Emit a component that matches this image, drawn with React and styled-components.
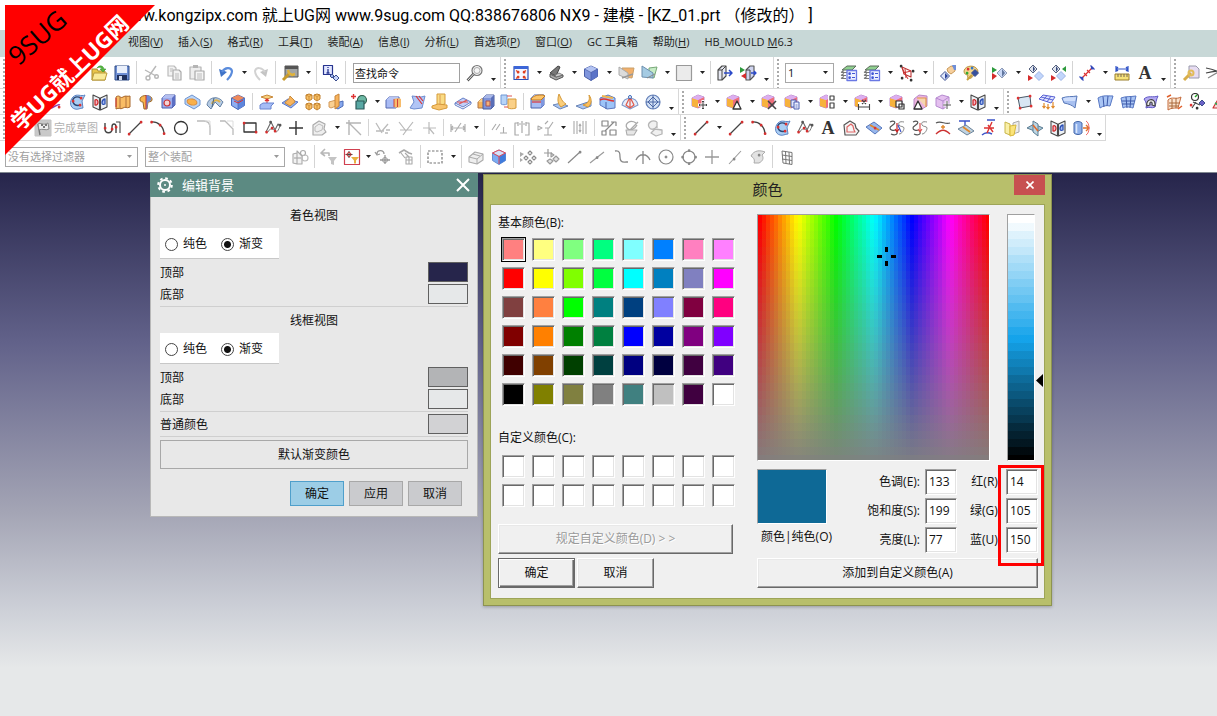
import React, { Fragment, createElement, useState } from 'react';
import styled, { createGlobalStyle, css } from 'styled-components';

const GlobalStyle = createGlobalStyle`
  *, *::before, *::after { box-sizing: border-box; }
  body {
    margin: 0;
    background: #fff;
    font-family: "Open Sans", "Noto Sans CJK SC", sans-serif;
    font-size: 12px;
    line-height: 16px;
    color: #111;
  }
  button, input, select { font: inherit; color: inherit; margin: 0; border-radius: 0; }
`;

/* ---------- icon drawing helpers (18 x 18 grid) ---------- */

const g = (...els) => createElement(Fragment, null, ...els);
const F = (d, fill) => <path d={d} fill={fill} />;
const P = (d, stroke = '#555', w = 1.2, fill = 'none') => (
  <path d={d} stroke={stroke} strokeWidth={w} fill={fill} strokeLinejoin="round" />
);
const D = (color, ...pts) => g(...pts.map(([x, y]) => <rect x={x - 1.2} y={y - 1.2} width="2.6" height="2.6" rx="1" fill={color} />));
const C = (x, y, r, stroke, w = 1.2, fill = 'none') => <circle cx={x} cy={y} r={r} stroke={stroke} strokeWidth={w} fill={fill} />;

const cube = (top, left, right, line) =>
  g(
    P('M9 2l6.500 3v7.500l-6.500 4-6.500-4V5z', line, 1, left),
    F('M9 2l6.500 3L9 8.500 2.500 5z', top),
    F('M9 8.500L15.500 5v7.500L9 16.500z', right),
    P('M2.500 5L9 8.500l6.500-3.500M9 8.500v8', line, 0.7)
  );
const box = (x, y, w, h, top, front, side, line) =>
  g(
    P(`M${x} ${y + 3}l3-3h${w}v${h}l-3 3h-${w}z`, line, 1, front),
    F(`M${x} ${y + 3}l3-3h${w}l-3 3z`, top),
    F(`M${x + w} ${y + 3}l3-3v${h}l-3 3z`, side)
  );
const pinkBox = g(
  P('M2 5l6-3 6 2v8l-6 3-6-2z', '#b78ac8', 1, '#e9a2dc'),
  F('M2 5l6 2v8l-6-2z', '#f7b23c'),
  F('M8 7l6-3v8l-6 3z', '#ee6f7c'),
  F('M2 5l6-3 6 2-6 3z', '#dcaef0')
);
const sheet = (fill = '#b9cdf6', line = '#6b88cc') => P('M2 6c4-4 9-1 14-3-2 4-2 7-3 11-4 2-6-1-9 1 1-4 0-6-2-9z', line, 1, fill);
const diamond = (x, y, s, fill, line = '#3c4f8e') => P(`M${x} ${y - s}l${s} ${s}-${s} ${s}-${s}-${s}z`, line, 1, fill);
const mirror = g(
  P('M2 2l6.500 3v12L2 14z', '#4a4a4a', 1.1, '#eef2f6'),
  P('M16 2l-6.500 3v12l6.500-3z', '#4a4a4a', 1.1, '#eef2f6'),
  P('M4 7c4-2 4 6 0 5z', '#c22', 1.2, '#f3b6c6'),
  P('M14 6c-4 1-4 7 0 5z', '#2c50b4', 1.3, '#a9bdf2')
);
const curveSheet = g(
  P('M5 4c4-4 8 0 12-2l-3 6 1 7c-3 0-5 2-8 1C2 15 1 8 5 4z', '#5d84c4', 1, '#a9cdf4'),
  P('M13 5C7 2 4 6 5 9s4 4 8 3', '#2a4673', 1.4),
  D('#d33', [13, 5], [5, 8], [12, 12])
);
const layers = g(
  P('M2 6l5-4h9l-4 4z', '#5d6d5d', 1, '#8fd08f'),
  P('M1 8.500l3-2M1 11.500l3-2M1 14.500l3-2M2 8.500h5M2 11.500h4M2 14.500h4', '#777', 1.2),
  P('M7 6.500h9.500v10H7z', '#6a78e4', 1.3, '#eef1ff'),
  D('#4056d6', [9.500, 9.500], [9.500, 13.500]),
  P('M12 9.500h3M12 13.500h3', '#4056d6', 1.2)
);
const line = g(P('M3 15L15 3', '#444', 1.2), D('#d32f2f', [3, 15], [15, 3]));
const arc = g(P('M2 3c7-1 13 5 13 12', '#444', 1.3), D('#d32f2f', [2.500, 3], [11, 6], [15, 14.500]));
const letterA = <text x="9" y="15" textAnchor="middle" fontFamily="Liberation Serif, serif" fontWeight="700" fontSize="18" fill="#333">A</text>;
const poly = g(P('M2 13L7 3l3 6 1 2 3-6 2 2', '#666', 1.1), P('M4 13c1-3 4-4 6-2s3 4 6-4', '#777', 1), D('#d32f2f', [2.500, 13], [8, 9], [11, 12]), D('#555', [6.500, 3], [16, 6]));
const hook = (c2) => g(
  P('M2 3c4-2 6 0 4 2s-4 2-4 4 3 3 6 2M3 15c4 2 7 0 6-2', '#555', 1.2),
  P('M16 3c-5-1-6 1-5 3s5 1 5 3-2 6-5 6', '#888', 1),
  P('M9 4v8M7 10l2 3 2-3', c2, 1.2)
);
const greyShape = g(P('M3 6l6-4 6 3-1 5 2 3-4 3H3z', '#aaa', 1.2, '#eee'), P('M5 8l4-3 4 2-1 4-5 2-2-1z', '#bbb', 1));
const grid4 = P('M4 3l10 1.500M4 7l10 1.500M4 11l10 1.500M5 15l9 1.500M4 3l1 12M7.500 3.500l.5 12M11 4l.5 12M14 4.500v12', '#777', 1);

const ICONS = {
  open: g(P('M2 5h5l1 2h7v9H2z', '#a98a2a', 1, '#e8c44a'), P('M4 9h13l-2 7H2z', '#b99a3a', 1, '#f9ea9a'), P('M7 4c2-3 6-3 7 1h2l-3 3-3-3h2c-1-2-3-2-5-1z', '#2f8f2f', 0.5, '#58b83f')),
  save: g(P('M2 2h14v14H2z', '#2c4a86', 1, '#6f8fd4'), F('M4 2h10v7H4z', '#eaf0fb'), F('M4 11h10v5H4z', '#20315c'), F('M6 12h3v4H6z', '#d0d8ea')),
  cut: g(P('M14 2L7 12M3 6l11 6', '#b8b8b8', 1.4), C(6, 14, 2, '#b8b8b8', 1.4), C(14.500, 12.500, 1.800, '#b8b8b8', 1.4)),
  copy: g(P('M3 2h6l2 2v8H3z', '#bbb', 1.2, '#f2f2f2'), P('M8 6h6l2 2v8H8z', '#aaa', 1.2, '#f2f2f2'), P('M10 10h4M10 12h4M10 14h4M5 5h3M5 7h2', '#bbb', 1)),
  paste: g(P('M2 3h11v12H2z', '#b5b5b5', 1.2, '#eee'), F('M5 1h5v3H5z', '#b5b5b5'), P('M7 7h9v9H7z', '#aaa', 1.2, '#f5f5f5'), P('M9 10h5M9 12h5M9 14h5', '#bbb', 1)),
  undo: g(F('M2 5l2 8 6-5z', '#3f73c8'), P('M5 8c3-5 9-5 10-1 0 4-3 7-5 9', '#5b8cdc', 2.2)),
  redo: g(F('M16 5l-2 8-6-5z', '#c4c4c4'), P('M13 8C10 3 4 3 3 7c0 4 3 7 5 9', '#d2d2d2', 2)),
  wrench: g(P('M4 2h13v11H4z', '#555', 1, '#a2a5a5'), F('M4 2h13v3H4z', '#555'), P('M2 16l6-6', '#c79a2c', 3), P('M7 6l1 3 3 2 3-1', '#e0b23a', 2.4)),
  info: g(P('M1.500 1.500h9v9h-9z', '#26348f', 1.2, '#e3e7ff'), P('M6 5v4M6 3v1M4.500 9h3', '#26348f', 1.3), diamond(10, 12, 2, '#9db2ee'), diamond(14, 14, 3, '#c4d2fa')),
  search: g(C(11, 6.500, 5, '#777', 1.2, '#f5f5f5'), C(11, 6.500, 3, '#aaa', 1), P('M7.500 10l-6 6.500', '#555', 2.6), P('M7.500 10l-6 6.500', '#eee', 1)),
  fit: g(P('M2 2.500h14v13H2z', '#2c4fb5', 1.2, '#f7f7ff'), F('M2 2h14v3H2z', '#3c66d8'), D('#e04020', [6, 8], [12, 8], [6, 13], [12, 13]), P('M4 6.500l3 2M14 6.500l-3 2M4 14.500l3-2M14 14.500l-3-2', '#e04020', 1.2)),
  laptop: g(P('M3 9l8-7 2 1-4 9z', '#444', 1, '#777'), P('M3 10l6 3 7-2v2l-7 3-6-3z', '#555', 1, '#aaa'), P('M9 13l7-2-4-2-4 2z', '#666', 0.8, '#ccc')),
  cube: cube('#b3c3f2', '#7f95dc', '#5b74c8', '#4a5fa8'),
  orangePanel: g(P('M5 4h12l-2 10-8-1z', '#c9a06a', 1, '#f2b06c'), P('M2 3l9 6v6l-9-4z', '#aaa', 1, '#dcdcdc'), P('M5 14l11-4', '#999', 1.4)),
  clipPanel: g(P('M9 4l8-1-3 11-5-1z', '#77a877', 1, '#c6ecc6'), P('M2 2l11 7v5L2 13z', '#6c8fae', 1, '#a5cbe3'), P('M7 14l8-4', '#888', 1)),
  square: P('M1.500 1.500h15v15h-15z', '#999', 1.2, '#ebebeb'),
  exit: g(P('M2 6l4-4h4v10l-4 4H2z', '#444', 1.1, '#e6e8f2'), P('M6 6l4-4M2 6h4v10', '#444', 1), P('M8 9h8M13 6l3 3-3 3', '#2b49c9', 1.5)),
  exitFlag: g(P('M7 6l4-4h4v10l-4 4H7z', '#555', 1.1, '#cfd4f0'), P('M11 6v10M7 6h4', '#444', 1), F('M1 3l5 3-5 3z', '#2c9a3c'), F('M7 9v6l-5-3z', '#d42c2c'), P('M12 9h5M15 7l2 2-2 2', '#2b49c9', 1.3)),
  layers,
  wcs: g(P('M4 3l9 4 0 6-7-3z', '#b33', 1.1), P('M4 4l6 11M5 9l8-2M7 5l1 9', '#c33', 1), D('#333', [3, 2], [15, 7], [4, 14], [13, 16])),
  partHand: g(P('M8 5l4-3 4 1v4l-4 3-3-2z', '#c99a5a', 1, '#f6cf9c'), F('M13 1h4v5h-2z', '#6f8fd8'), diamond(6, 12, 4.500, '#dfe6fb'), F('M6 9l3 3-3 3z', '#2d459c')),
  palette: g(P('M2 7c1-6 12-7 14 0 0 3-4 2-5 5s-7 4-5-1c-2 0-4-1-4-4z', '#b99447', 1, '#f5d68c'), D('#d33', [6, 5]), D('#37c', [10, 4]), D('#3a3', [5, 9]), diamond(13, 9, 3.500, '#36509e'), P('M5 16l5-5', '#c8a13e', 2)),
  flagPair: g(F('M1 3l5 3-5 3z', '#2c9a3c'), F('M1 9l5 3-5 4z', '#d42c2c'), diamond(11, 9, 5, '#c9d8f6', '#8f9cb8'), F('M11 5l3 4-3 4z', '#62779f')),
  dia1: g(diamond(7, 5, 4, '#dfe4ee', '#56627e'), F('M7 2l2 3-2 3z', '#34467a'), diamond(13, 12, 4.500, '#c2d6fb', '#9db4e6'), F('M2 11l5 3-5 3z', '#d42c2c')),
  dia2: g(diamond(7, 5, 4, '#dfe4ee', '#56627e'), F('M7 2l2 3-2 3z', '#34467a'), diamond(12, 12, 4.500, '#c2d6fb', '#9db4e6'), F('M2 11l5 3-5 3z', '#d42c2c'), F('M17 2v6l-4-3z', '#2c9a3c')),
  measure: g(P('M4 14L14 4', '#d33', 1.2), P('M6 9l3 3M9 6l3 3', '#d33', 1.1), P('M1.500 12.500l4 4M12.500 1.500l4 4', '#3448b8', 1.2), D('#3448b8', [4, 14], [14, 4])),
  ruler: g(P('M3 2v6M15 2v6M3 5h12M5 3L3 5l2 2M13 3l2 2-2 2', '#2f52c8', 1.2), P('M2 10h14v6H2z', '#9a7f2a', 1, '#f6e27a'), P('M5 10v3M8 10v3M11 10v3M14 10v3', '#765', 1)),
  letterA,
  keyDoc: g(P('M7 2h7l3 3v9H7z', '#99a', 1, '#e7dcf2'), P('M2 16l7-7', '#d8ae4a', 3), C(9, 9, 2.500, '#e2bc5a', 2)),
  redCurve: g(P('M1 4c8 1 11 3 16 6M1 9c8-2 12-2 16-2', '#444', 1.2), P('M3 14l12-7', '#888', 1.1)),

  swirl: g(P('M2 12c4 3 8-8 12-4M3 15c5 2 9-5 12-3', '#8a3bb0', 1.5), D('#d33', [14, 14])),
  curveSheet,
  mirror,
  orangeTube: g(P('M2 4c4-3 4 2 7 0s4 0 7-1v11c-4 2-4-1-7 1s-4-1-7 1z', '#a8672b', 1, '#f9bc64'), P('M6 4v11M12 3v12', '#b0713a', 1), P('M2 5v9', '#c33', 1)),
  mushroom: g(P('M3 7c-1-6 13-6 12 0 0 2-4 2-4 2l-1 7H7L6 9S3 9 3 7z', '#9a6a2c', 1, '#f7b44c'), F('M9 2c6 0 7 6 2 7l-1 7H9z', '#6d8ad8'), P('M9 2v14', '#c33', 1)),
  holeCube: g(box(2, 2, 10, 10, '#b3bff2', '#9babec', '#5c6fc4', '#4b5cab'), C(7, 10, 3, '#c33', 1.2, '#f3d3d3')),
  orangeBlob: g(P('M2 6l7-4 8 5v5l-6 4-9-5z', '#6f94d0', 1, '#b9d5f8'), <ellipse cx="9" cy="9" rx="5" ry="3" fill="#f9b04a" stroke="#d98a3c" transform="rotate(12 9 9)" />),
  dome: g(P('M1 12C2 4 12 2 17 9l-3 5-5-5-4 7z', '#6682a4', 1, '#b5cbe4'), P('M6 11c1-4 5-5 8-2', '#e0b24b', 2), P('M8 5l-2 9', '#4a6684', 1)),
  bluePad: g(cube('#f08a5c', '#8eaef2', '#5f86dc', '#4668b8'), P('M5 8l4 2 5-3', '#d33', 1)),
  liftPad: g(P('M3 4l6-2 6 2-6 2z', '#c98a3c', 1, '#f8d07c'), P('M9 6v6M7 8l2-2 2 2', '#d33', 1.2), P('M2 12l3-2h11l-3 3v3H2z', '#6a86d0', 1, '#a6bdf6')),
  wavePad: g(P('M1 10l6-4 10 3-7 6z', '#5b77c8', 1, '#8fb1f2'), P('M4 10c2-4 4-2 5-7l4 4 1 2-5 4z', '#c78a3c', 1, '#f8b45c')),
  fourCubes: g(...[[2, 1], [10, 1], [2, 10], [10, 10]].map(([x, y]) => g(
    P(`M${x} ${y + 1}l3-1 3 1v4l-3 2-3-2z`, '#c07f2c', 1, '#fbc468'),
    P(`M${x} ${y + 1}l3 1.500 3-1.500M${x + 3} ${y + 3}v3`, '#c07f2c', 0.8)
  ))),
  splitBox: g(P('M9 10l7-2v5l-5 3-2-1z', '#4d6cb8', 1, '#86a7ee'), P('M2 9l7-2v6l-5 2-2-1z', '#d39a5a', 1, '#fad092'), P('M8 3l4-2v12l-4 3z', '#c8863a', 1, '#f7b35c')),
  addShape: g(C(12, 7, 4.500, '#2d5a4a', 1.1, '#6cb8a4'), P('M6 8h8v8H6z', '#2d5a5a', 1.2, '#58a8a4'), P('M1 3.500h5M3.500 1v5', '#d33', 1.4)),
  cylBox: g(box(1, 4, 10, 8, '#b7c5f4', '#a9bbf4', '#6a82d2', '#5468b0'), F('M9 6c2-1 6-1 7 0v8c-2 1-5 1-7 0z', '#f7bc6c'), P('M9 6v8M12.500 6v8', '#c33', 0.9)),
  foldSheet: g(P('M4 3l9 1 4-1-3 12-8 1-4-1 4-6z', '#6d8cd0', 1, '#b1c5f6'), P('M8 3l6 8M11 3l4 5', '#d33', 1.2)),
  trimY: g(P('M6 1h8v10l-8 2z', '#d59a3a', 1, '#fadc84'), P('M1 13l6-2 9 1v3l-8 2-7-2z', '#d59a3a', 1, '#f8c46c'), P('M9 2v10', '#d99a55', 1)),
  padLine: g(P('M1 10l8-5 8 4-8 5z', '#6681c8', 1, '#c3d0f8'), P('M3 9h11M5 11l8-4', '#d55', 1.1), P('M1 10v2l8 4 8-5V9', '#6681c8', 1)),
  orangeBlock: g(box(1, 6, 6, 6, '#f9cf8c', '#f7b45a', '#dc8a3c', '#af774a'), box(6, 2, 8, 11, '#a9b8e8', '#7f93d8', '#5a6fb8', '#4b5c9b'), P('M9 8h4v5H9z', '#a55', 1, '#f3b27a')),
  twoTubes: g(P('M1 2h6v9c-2 1-4 1-6 0z', '#6f96d4', 1, '#b6d4f8'), P('M8 6h8v9c-3 1-6 1-8 0z', '#d59a3a', 1, '#fad088'), P('M7 3h5M4 14h4', '#d55', 1)),
  edgeBlend: g(box(2, 2, 10, 10, '#c9d5f8', '#a8bdf2', '#7f97e0', '#4b62ab'), P('M2 6c3-4 7-4 12-4l2 1-4 4H3z', '#c37a1c', 1, '#fbc46a'), P('M3 9h9', '#d33', 1.2)),
  faceBlend: g(P('M1 12l7 4 8-3-7-3z', '#6a86b8', 1, '#a9c4f0'), P('M7 1c2 4 3 8 7 10l-5 3c-3-3-4-7-2-13z', '#d59a3a', 1, '#fbce7a')),
  faceBlend2: g(P('M1 13l7 3 8-3V8z', '#6a86b8', 1, '#a9c4f0'), P('M14 2c1 5 0 8-6 10l5 2c4-3 4-8 1-12z', '#d59a3a', 1, '#fbbe5a')),
  sheetRed: g(P('M2 5l8-3 7 3v10l-8 1-7-4z', '#5d78c0', 1, '#9dc4f8'), P('M2 7c5-3 9 1 14 1', '#d33', 1.6), P('M4 3l11 2', '#f0b44c', 2), P('M8 9v7', '#4a62a8', 1)),
  tentRed: g(P('M1 12C3 3 15 3 17 12l-8 4z', '#7f97c8', 1.1, '#e6eefb'), P('M9 3v12M9 4l-4 8 4 3M9 4l4 8-4 3', '#e05a4a', 1.2), C(9, 4, 1.500, '#36b', 1, '#fff')),
  globe: g(C(9, 9, 7, '#6480b8', 1.2, '#d4e2f6'), P('M9 2v14M2 9h14', '#4a66a4', 1), P('M9 4l5 5-5 5-5-5z', '#4a66a4', 1)),
  pinkMove: g(pinkBox, P('M13 7v10M8 12h10', '#fff', 3), P('M13 8v8M9 12h8M12 9l1-1 1 1M12 15l1 1 1-1M10 11l-1 1 1 1M16 11l1 1-1 1', '#444', 1)),
  pinkTri: g(pinkBox, P('M12 8l4 8H8z', '#333', 1.3, '#fff')),
  pinkX: g(pinkBox, P('M8 8l8 8M16 8l-8 8', '#444', 1.6)),
  pinkCopy: g(pinkBox, P('M8 7h5v7H8z', '#4a5fb0', 1, '#dfe5fb'), P('M11 9h5v7h-5z', '#4a5fb0', 1, '#eef1ff'), P('M12.500 12h2M12.500 14h2', '#4a5fb0', 0.8)),
  pinkPair: g(pinkBox, F('M10 2h8v14h-8z', '#fff'), P('M12 3h4v4h-4zM12 10h4v5h-4z', '#444', 1.2)),
  pinkDim: g(pinkBox, F('M5 9h13v8H5z', '#fff'), P('M5.500 11v6M16.500 11v6M5.500 14h11M9 7l4 4M13 7l-4 4', '#444', 1.1)),
  pinkSel: g(pinkBox, P('M8 8h6v6H8z', '#333', 1.2, '#fff'), P('M11 11h5v5h-5z', '#333', 1.2)),
  pinkDelta: g(P('M3 6l5-4 8 1v10l-5 3H3z', '#b98ac8', 1, '#ecb3de'), P('M6 5h9v9', '#e0954c', 1.2, '#f5d6b0'), P('M7 8l4 8H3z', '#333', 1.3, '#fff')),
  pinkPlain: g(P('M2 5l6-3 7 2v8l-6 4-7-3z', '#b68ad0', 1, '#e4c0ef'), P('M2 5l7 3 6-4M9 8v8', '#b68ad0', 1), P('M13 8v8M9 12h8', '#fff', 2.6), P('M13 8v8M9 12h8', '#555', 1)),
  quad: g(P('M3 5l12-2 1 10-11 2z', '#4a5a68', 1, '#d8e6f4'), D('#d33', [3, 5], [15, 3], [16, 13], [5, 15])),
  meshArrow: g(P('M5 2l12 2-4 6-12-4z', '#5a63d4', 1, '#dfe4ff'), P('M9 2.500L5 7.500M13 3L9 9M3 4l12 3', '#5a63d4', 1), P('M6 10v5M10 11v5M15 9v6M4.500 13L6 15l1.500-2M8.500 14l1.500 2 1.500-2M13.500 13l1.500 2 1.500-2', '#e08a2c', 1.2)),
  bluePlate: g(P('M1 5c5-2 10-1 15-2l-2 12c-3-3-6-4-11-5z', '#5878b8', 1, '#a8c0f0'), F('M2 5.500c5-2 9-1 13-1.500l-1 4H3z', '#cfdefc')),
  plate3: g(P('M2 5c5-3 9-2 15-2l-3 10c-4-1-7 0-10 2z', '#5878c4', 1, '#a8c4f4'), P('M7 3.500L8 14M12 3l-1 10', '#3c58a8', 1)),
  plateGrid: g(P('M2 5c5-2 9-1 15-2l-3 12c-4-1-7-2-10 0z', '#5878c4', 1, '#a8c4f4'), P('M7 4L8 15M12 3.500l-1 11M3 8h13M3 11h12', '#3c58a8', 1)),
  plateArc: g(sheet('#b3a9f2', '#5f58c4'), P('M5 13c-2-7 8-9 8-2v2l-3-1c1-4-3-4-2 0z', '#444', 1.2, '#eee')),
  meshOrange: g(P('M3 7c4-4 8 0 13-3l-3 11c-5 0-7 0-10 2z', '#c46a3a', 1, '#fbe3cf'), P('M4 10h11M4 13h10M7 6v10M11 5v10', '#a8683a', 1), P('M2 4l4-2M13 16l4-3', '#e0602c', 1.5)),
  analyse: g(C(7, 4, 3.500, '#333', 1.2, '#fff'), P('M7 4l2-2', '#2a2', 1.4), P('M5 9l7 3M4 15l4-6', '#444', 1.1), diamond(14, 10, 3, '#6c62c8'), D('#d33', [3, 12]), D('#333', [9, 15])),
  redTri: g(P('M2 15L9 3l7 12z', '#c33', 1.2, '#f8dede'), P('M4 10l8 5', '#3a5', 1.5)),

  flag: g(P('M1 1h16v16H1z', '#c4c4c4', 1, '#c9c9c9'), P('M6 16L4 5', '#777', 1.4), P('M4 5c3-2 5 2 10-1l1 6c-4 2-6-1-10 1z', '#888', 1, '#eee'), F('M7 5h2v2H7zM11 5h2v2h-2zM9 7h2v2H9z', '#777')),
  profile: g(P('M2 4v6c0 5 7 5 7 0V8c0-4 4-4 4 0v6', '#444', 1.4), P('M13 3h4v11', '#444', 1.1), D('#d32f2f', [2, 9], [9, 10], [13, 8])),
  line,
  arc,
  circle: C(9, 9, 6.500, '#333', 1.3),
  fillet: g(P('M2 2h7c4 0 6 3 6 7v7', '#bbb', 1.3), P('M10 2h5v5', '#ddd', 1)),
  fillet2: g(P('M2 2l5 0 8 8v6', '#bbb', 1.3), P('M9 2h6v6', '#ddd', 1)),
  rect: g(P('M3 4h12v9H3z', '#333', 1.3), D('#d32f2f', [3, 4], [15, 13])),
  poly,
  plus: P('M9 2v14M2 9h14', '#333', 1.4),
  greyShape,
  trimCorner: P('M1 4h15M4 1v15M4 4l12 12', '#b5b5b5', 1.4),
  gTrim: P('M2 4l6 10M2 12h8M8 12l6-7M12 11h4M11 14h3', '#bbb', 1.3),
  gTrim2: P('M2 3l7 9M9 12l7-9M9 12l-3 4M3 11h12', '#b8b8b8', 1.2),
  gCross: P('M3 9h13M9 3v12M9 9l5 6', '#bbb', 1.2),
  gDim: P('M2 5v8M16 5v8M2 9h14M4 7L2 9l2 2M14 7l2 2-2 2M6 13l6-9', '#b0b0b0', 1.2),
  gPara: P('M2 11l4-6M6 11l4-6M10 14h7M13.500 8v6', '#aaa', 1.1),
  gBracket: P('M5 4H2v12h4M13 4h3v12h-4M9 2v12M6 5h2M10 5h2M5 3v4M13 3v4', '#aaa', 1.2),
  gFix: P('M2 7l4 2-4 2zM8 16h8M12 16V9M9 9h4l4-6M9 5l3-3', '#aaa', 1.1),
  gColumns: P('M3 2v13M6 2v13M12 2v13M15 2v13M9 5v8M8 7l1-2 1 2M8 11l1 2 1-2', '#aaa', 1.1),
  gBoxes: P('M2 2h6v5H2zM11 3h5v4M2 12h4v4H2zM10 11h6v5h-6zM5 12l9-9', '#888', 1.2),
  gSwirl: g(P('M13 4C7 0 1 5 4 9s8 1 10-3M6 12l9-9', '#aaa', 1.3), P('M3 11h11l-3 5H4z', '#aaa', 1.1, '#e6e6e6')),
  gHand: P('M11 3C6 0 1 4 3 8s6 2 8-1M11 3v6M5 14l4-4 7 1v4l-6 2z', '#b5b5b5', 1.3, '#f0f0f0'),
  offset: g(P('M2 6l6-4 5 3 1 4 3 3-3 4H3z', '#555', 1.2, '#f6f6f6'), P('M5 8l4-3 2 2 1 4 1 2H5z', '#d66', 1.2)),
  blueDia: g(P('M1 8l8-5 8 6-7 6z', '#5677bc', 1, '#98b7ec'), P('M5 6l9 5', '#e0882c', 1.8), D('#d33', [10, 9])),
  hookRed: g(hook('#c22'), P('M10 6l3 7', '#3a52c8', 1.2)),
  hookGrey: hook('#d55'),
  bridge: g(P('M2 4c5-3 9 2 14 0', '#555', 1.2), P('M2 15c5-5 9-5 14 0', '#c33', 1.4), P('M9 6v4M7 8h4', '#e0882c', 1.4)),
  project: g(P('M2 2h11M8 2v5', '#3a52c8', 1.4), P('M1 10l8-4 8 6-7 4z', '#6a8298', 1, '#bfd3e2'), P('M6 8l7 5', '#e0882c', 1.8)),
  projectX: g(P('M7 1h8M2 16c4-4 8-2 10-1', '#3a52c8', 1.4), P('M4 9h10M12 3L7 14M8 6l5 7', '#d33', 1.4)),
  yellowBook: g(P('M2 3l5 2v11l-5-2z', '#c8b64a', 1, '#faf0a8'), P('M16 2l-6 2v11l6-2z', '#aaa', 1, '#ececec'), P('M7 7l6-1-2 10-4 1z', '#d8b83a', 1, '#fbe47a')),
  crossPlane: g(P('M1 9l7-4 9 4-6 4z', '#5b7c92', 1, '#a9c8d8'), P('M7 2l5 3v12l-5-4z', '#5b7c92', 1, '#bcd6e4'), P('M7 6l5 6', '#e06a2c', 1.6)),
  cylArrow: g(P('M2 4c2-2 6-2 8 0v10c-2 2-6 2-8 0z', '#4467a8', 1, '#8fb0ea'), P('M4.500 5v9', '#dbe7fb', 1.6), P('M11 9h5M14 6l3 3-3 3', '#e0722c', 1.4), P('M14 2c4 2 4 12 0 14', '#e66', 1)),

  gAssem: g(P('M2 6l4-1v11l-4-1zM6 3v13h5V8z', '#aaa', 1.1, '#f2f2f2'), C(12, 5, 2.500, '#aaa'), C(14, 10, 3, '#bbb'), P('M3 10h7', '#aaa')),
  gUndoFilter: g(P('M5 1L1 5l4 3M1 5h8v3', '#b8b8b8', 1.6), F('M8 9h9l-3 4v4l-3-1v-3z', '#c4c4c4')),
  filterBox: g(P('M1.500 1.500h15v15h-15z', '#d04050', 1.2, '#fff'), P('M6 3v7M2.500 6.500h7', '#444', 1), C(6, 6.500, 2, '#c33', 1), F('M8 9h8l-3 3.500v3h-2v-3z', '#e8b040')),
  gSwapPlus: g(P('M3 6c0-5 7-4 7 0M1 4l2 3 3-1M11 7v9M6 12h10', '#999', 1.3), C(11, 12, 2.500, '#999', 1)),
  gFingers: g(P('M2 5l5-3 5 3 3 1', '#aaa', 1.6), P('M4 5l4 5M8 5l4 4M9 9h6v7H9zM12 9v7M9 12h6', '#aaa', 1.1)),
  dashed: <path d="M2 3h14v12H2z" fill="none" stroke="#777" strokeWidth="1.2" strokeDasharray="2.500 1.500" />,
  gBrick: g(P('M2 9l6-5 8 2v6l-6 4-8-2z', '#aaa', 1.1, '#eee'), P('M2 9l8 2 6-5M10 11v5M6 6l7 2', '#aaa', 1)),
  redCube: g(cube('#d4e2fb', '#7cacf4', '#3f7bdc', '#6a8fd0'), P('M2.500 5L9 2l6.500 3L9 8.500zM9 8v8', '#e04a5a', 1)),
  gPoints: g(F('M1 4l4 2-4 3zM1 10l3 2-3 2z', '#aaa'), P('M11 3l2 2-2 2-2-2zM7 8l2 2-2 2-2-2zM15 8l2 2-2 2-2-2zM11 12l2 2-2 2-2-2z', '#888', 1.1)),
  gMoveDia: g(P('M6 1v8M2 5h8', '#999', 1.2), P('M9 5l3 2-3 2zM14 8l3 3-3 3-3-3zM8 11l3 2-3 3-3-3z', '#999', 1.1, '#e4e4e4')),
  gLine: g(P('M3 15L15 4', '#888', 1.2), D('#888', [15, 4])),
  gMid: g(P('M2 15L16 4', '#999', 1.1), D('#888', [9, 9.500])),
  gSpline: P('M4 3c5-1 5 3 5 6s1 6 6 5M15 14h2', '#888', 1.3),
  gIntersect: P('M9 3v13M2 12c3-7 11-7 14 0', '#888', 1.3),
  gCenter: g(C(9, 9, 7, '#888', 1.2), C(9, 9, 1, '#888', 1, '#888')),
  gQuad: g(C(9, 9, 6, '#888', 1.2), D('#888', [9, 2.500], [9, 15.500], [2.500, 9], [15.500, 9])),
  gPlus: P('M9 2v14M2 9h14', '#999', 1.3),
  gTangent: g(P('M3 16L15 3', '#999', 1.1), D('#888', [8, 11])),
  gFace: g(P('M2 8c3-6 9-6 14-4l-3 3c2 3 1 6-3 8H5c1-3 0-5-3-7z', '#aaa', 1, '#e2e2e2'), D('#888', [10, 7])),
  gGrid: grid4,
};

/* ---------- toolbar parts ---------- */

const TitleBar = styled.header`
  height: 30px;
  padding-left: 119px;
  font-family: Roboto, "Noto Sans CJK SC", sans-serif;
  font-size: 16px;
  line-height: 32px;
  white-space: nowrap;
  overflow: hidden;
  color: #000;
`;
const MenuBar = styled.nav`
  display: flex;
  gap: 15px;
  height: 27px;
  padding: 4px 0 0 128px;
  background: #c8d8d7;
  font-size: 11px;
  white-space: nowrap;
  overflow: hidden;
`;
const MenuLink = styled.a`
  color: #222;
  text-decoration: none;
`;
const ToolRow = styled.div`
  display: flex;
  align-items: stretch;
  width: ${(p) => (p.$fit ? 'fit-content' : 'auto')};
  max-width: 100%;
  height: ${(p) => p.$h}px;
  overflow: hidden;
  background: #fff;
  border-bottom: ${(p) => (p.$plain ? '0' : '1px solid #d8d8d8')};
  border-right: ${(p) => (p.$fit ? '1px solid #d8d8d8' : '0')};
`;
const ToolButton = styled.button`
  display: flex;
  align-items: center;
  gap: 2px;
  flex: none;
  min-width: 23px;
  padding: 0 3px 0 2px;
  border: 0;
  background: none;
  color: #b0b0b0;
  font-size: 11px;
  white-space: nowrap;
`;
const CaretButton = styled.button`
  display: flex;
  align-items: center;
  justify-content: center;
  flex: none;
  width: ${(p) => (p.$tight ? 8 : 12)}px;
  padding: ${(p) => (p.$low ? '14px' : '0')} 0 0;
  border: 0;
  background: none;
`;
const Divider = styled.span`
  flex: none;
  width: 1px;
  margin: 4px 3px 4px 2px;
  background: #d4d4d4;
`;
const Grip = styled.span`
  flex: none;
  width: ${(p) => (p.$first ? 6 : 10)}px;
  margin-left: ${(p) => (p.$first ? 0 : 1)}px;
  border-left: ${(p) => (p.$first ? '0' : '1px solid #d8d8d8')};
  background: repeating-linear-gradient(to bottom, #aaa 0 2px, #fff 2px 4px) 3px 2px / 2px 100% no-repeat;
`;
const Lead = styled.span`
  flex: none;
  width: ${(p) => p.$w}px;
`;
const CommandInput = styled.input`
  flex: none;
  align-self: center;
  width: 107px;
  height: 20px;
  margin: 0 4px;
  padding: 0 1px;
  border: 1px solid #a0a0a0;
  font-size: 11px;
  outline: none;
`;
const SelectBox = styled.span`
  position: relative;
  display: flex;
  align-items: center;
  flex: none;
  align-self: center;
  width: ${(p) => p.$w}px;
  height: 20px;
  margin: ${(p) => p.$m};
  border: 1px solid #a8a8a8;
  color: ${(p) => (p.$muted ? '#a0a0a0' : '#111')};
  select {
    width: 100%;
    height: 100%;
    padding: 0 2px;
    border: 0;
    outline: none;
    background: none;
    appearance: none;
    font-size: 11px;
  }
  svg {
    position: absolute;
    right: 5px;
    pointer-events: none;
  }
`;

const Caret = ({ color = '#222' }) => (
  <svg width="5" height="3" viewBox="0 0 5 3"><path d="M0 0h5L2.500 3z" fill={color} /></svg>
);
const Icon = ({ name }) => (
  <svg width="18" height="18" viewBox="0 0 18 18" fill="none" aria-hidden="true">{ICONS[name]}</svg>
);
/* v: drop-down caret, t: tight caret, o: overflow caret, G: end of band and grip, |: divider */
const Tools = ({ items }) =>
  items.split(' ').map((it, i) => {
    if (it === '|') return <Divider key={i} />;
    if (it === 'G') return <Grip key={i} />;
    if (it === 'v' || it === 'o' || it === 't')
      return <CaretButton key={i} $low={it === 'o'} $tight={it === 't'} aria-label="menu"><Caret /></CaretButton>;
    return <ToolButton key={i} aria-label={it}><Icon name={it} /></ToolButton>;
  });
const Picker = ({ label, w, m, muted }) => (
  <SelectBox $w={w} $m={m} $muted={muted}>
    <select aria-label={label}><option>{label}</option></select>
    <Caret color={muted ? '#999' : '#222'} />
  </SelectBox>
);

/* ---------- corner ribbon ---------- */

const Ribbon = styled.div`
  position: absolute;
  z-index: 5;
  top: 5px;
  left: 5px;
  width: 150px;
  height: 150px;
  pointer-events: none;
  &::before {
    content: '';
    position: absolute;
    inset: 0;
    background: #f00;
    clip-path: polygon(0 0, 100% 0, 0 100%);
  }
`;
const RibbonText = styled.span`
  position: absolute;
  left: ${(p) => p.$x}px;
  top: ${(p) => p.$y}px;
  transform: translate(-50%, -50%) rotate(${(p) => p.$turn}deg);
  color: ${(p) => p.$color};
  font-size: ${(p) => p.$size}px;
  font-weight: ${(p) => p.$weight};
  line-height: 24px;
  white-space: nowrap;
`;

/* ---------- workspace and dialogs ---------- */

const Page = styled.div`
  position: relative;
  display: flex;
  flex-direction: column;
  min-height: 100vh;
  overflow: hidden;
`;
const Workspace = styled.main`
  position: relative;
  flex: 1;
  min-height: 440px;
  border-top: 1px solid #808890;
  background: linear-gradient(to bottom, #26254b 0, #62628a 170px, #a4a5b5 340px, #cbced6 432px, #e6e8e9 495px, #e6e8e9 100%);
`;
const BgDialog = styled.section`
  position: absolute;
  left: 150px;
  top: 0;
  width: 328px;
  background: #e8e8e8;
  border: 1px solid #b8b8b8;
  border-top: 0;
`;
const BgTitle = styled.h2`
  display: flex;
  align-items: center;
  gap: 9px;
  height: 24px;
  margin: 0 -1px;
  padding: 0 7px;
  background: #5c8a82;
  color: #fff;
  font-size: 13px;
  font-weight: 400;
`;
const IconClose = styled.button`
  display: flex;
  margin-left: auto;
  padding: 0;
  border: 0;
  background: none;
`;
const BgBody = styled.div`
  padding: 5px 9px 10px;
`;
const ViewGroup = styled.fieldset`
  margin: 0;
  padding: 0;
  border: 0;
  border-bottom: 1px solid #cfcfcf;
`;
const ViewTitle = styled.div`
  height: 26px;
  line-height: 28px;
  text-align: center;
`;
const RadioPanel = styled.div`
  display: flex;
  align-items: center;
  gap: 14px;
  width: 119px;
  height: 30px;
  margin-bottom: 4px;
  padding: 2px 0 0 5px;
  background: #fff;
  box-shadow: 0 1px 0 #c8c8c8;
`;
const RadioLabel = styled.label`
  display: flex;
  align-items: center;
  gap: 5px;
`;
const Radio = styled.input`
  appearance: none;
  width: 13px;
  height: 13px;
  border: 1px solid #444;
  border-radius: 50% !important;
  background: #fff;
  &:checked { background: radial-gradient(circle, #111 0 3px, #fff 4px); }
`;
const ColorRow = styled.div`
  display: flex;
  justify-content: space-between;
  align-items: flex-start;
  height: 22px;
  line-height: 22px;
`;
const ColorWell = styled.button`
  width: 40px;
  height: 20px;
  padding: 0;
  border: 1px solid #606060;
  background: ${(p) => p.$color};
`;
const PlainGroup = styled.div`
  padding-top: 2px;
  margin-bottom: 3px;
  border-bottom: 1px solid #cfcfcf;
`;
const FlatButton = styled.button`
  height: ${(p) => (p.$wide ? 29 : 25)}px;
  width: ${(p) => (p.$wide ? '100%' : '54px')};
  padding: 0;
  border: 1px solid ${(p) => (p.$primary ? '#4f9fcb' : '#a8a8a8')};
  background: ${(p) => (p.$primary ? '#9ccde6' : p.$wide ? '#e8e8e8' : '#cacbce')};
`;
const FlatActions = styled.div`
  display: flex;
  justify-content: flex-end;
  gap: 5px;
  margin-top: 12px;
  padding-right: 6px;
`;

const ColorDialog = styled.section`
  position: absolute;
  left: 483px;
  top: 1px;
  width: 569px;
  padding: 0 6px 6px;
  border: 1px solid #8d9350;
  background: #b8bf6b;
  box-shadow: 0 1px 3px #00000040;
`;
const ColorTitle = styled.header`
  display: flex;
  justify-content: center;
  align-items: center;
  height: 29px;
  padding-bottom: 2px;
  h2 { margin: 0; font-size: 15px; font-weight: 400; color: #222; }
`;
const CloseBox = styled.button`
  position: absolute;
  top: 0;
  right: 6px;
  display: flex;
  align-items: center;
  justify-content: center;
  width: 31px;
  height: 20px;
  padding: 0;
  border: 0;
  background: #c75050;
`;
const Client = styled.div`
  display: flex;
  gap: 24px;
  height: 395px;
  padding: 9px 7px 10px;
  border: 1px solid #9da458;
  background: #f0f0f0;
`;
const Column = styled.div`
  display: flex;
  flex-direction: column;
  flex: none;
  width: ${(p) => p.$w}px;
`;
const Caption = styled.div`
  height: ${(p) => (p.$after ? 26 : 24)}px;
  padding-top: 1px;
`;
const SwatchGrid = styled.div`
  display: grid;
  grid-template-columns: repeat(8, 23px);
  gap: 6px 7px;
  padding-left: 4px;
  margin-bottom: ${(p) => p.$after}px;
`;
const sunken = css`
  border: 1px solid;
  border-color: #a0a0a0 #fff #fff #a0a0a0;
  box-shadow: inset 1px 1px 0 #696969, inset -1px -1px 0 #e3e3e3;
`;
const raised = css`
  border: 1px solid;
  border-color: #fff #696969 #696969 #fff;
  box-shadow: inset -1px -1px 0 #a0a0a0, inset 1px 1px 0 #e8e8e8;
`;
const Swatch = styled.button`
  height: 23px;
  padding: 0;
  ${sunken}
  background: ${(p) => p.$color};
  outline: ${(p) => (p.$selected ? '1px solid #000' : 'none')};
`;
const RaisedButton = styled.button`
  height: 30px;
  width: ${(p) => (p.$w ? `${p.$w}px` : '100%')};
  padding: 0;
  ${raised}
  background: #f0f0f0;
  ${(p) => p.$default && css`
    border-color: #696969;
    box-shadow: inset 1px 1px 0 #fff, inset -1px -1px 0 #696969, inset -2px -2px 0 #a0a0a0;
  `}
  &:disabled { color: #9a9a9a; text-shadow: 1px 1px 0 #fff; }
`;
const ButtonPair = styled.div`
  display: flex;
  gap: 2px;
  margin-top: 4px;
`;
const Pickers = styled.div`
  display: flex;
  height: 247px;
  margin-bottom: 8px;
`;

const steps = (n, px, fn, dir) =>
  `linear-gradient(${dir}, ${Array.from({ length: n }, (_, i) => `${fn(i, n)} ${i * px}px ${(i + 1) * px}px`).join(', ')})`;
const greyVeil = steps(31, 8, (i, n) => `rgba(128,128,128,${(i / n).toFixed(3)})`, 'to bottom');
const hueBands = steps(58, 4, (i, n) => `hsl(${Math.round((i / (n - 1)) * 360)} 100% 50%)`, 'to right');
const lumBands = steps(31, 8, (i, n) => `hsl(200 84% ${Math.round(100 - (i / (n - 1)) * 100)}%)`, 'to bottom');

const Spectrum = styled.div`
  position: relative;
  width: 233px;
  margin-right: 17px;
  border: 1px solid;
  border-color: #a0a0a0 #fff #fff #a0a0a0;
  background: ${greyVeil}, ${hueBands};
`;
const Crosshair = styled.svg`
  position: absolute;
  left: 119px;
  top: 32px;
`;
const LumBar = styled.div`
  width: 28px;
  border: 1px solid;
  border-color: #a0a0a0 #fff #fff #a0a0a0;
  background: ${lumBands};
`;
const LumArrow = styled.svg`
  margin: 160px 0 0 1px;
`;
const Details = styled.div`
  display: flex;
  height: 89px;
`;
const Preview = styled.div`
  width: 70px;
  height: 55px;
  margin-bottom: 5px;
  border: 1px solid;
  border-color: #a0a0a0 #fff #fff #a0a0a0;
  background: #0e6996;
`;
const PreviewBox = styled.div`
  width: 94px;
  white-space: nowrap;
  span { padding-left: 4px; }
`;
const Fields = styled.div`
  display: grid;
  grid-template-columns: 74px 32px 49px 32px;
  grid-auto-rows: 26px;
  row-gap: 3px;
`;
const FieldLabel = styled.label`
  padding: 5px 5px 0 0;
  text-align: right;
  white-space: nowrap;
`;
const NumberInput = styled.input`
  width: 32px;
  height: 26px;
  padding: 0 0 2px 3px;
  ${sunken}
  outline: none;
  background: #fff;
  line-height: 16px;
`;
const RedMark = styled.div`
  position: absolute;
  left: 514px;
  top: 290px;
  width: 46px;
  height: 101px;
  border: 3px solid #f00;
  pointer-events: none;
`;

const MENUS = [
  ['视图(', 'V', ')'], ['插入(', 'S', ')'], ['格式(', 'R', ')'], ['工具(', 'T', ')'], ['装配(', 'A', ')'],
  ['信息(', 'I', ')'], ['分析(', 'L', ')'], ['首选项(', 'P', ')'], ['窗口(', 'O', ')'], ['GC 工具箱', '', ''],
  ['帮助(', 'H', ')'], ['HB_MOULD ', 'M', '6.3'],
];

const BASIC = (
  'ff8080 ffff80 80ff80 00ff80 80ffff 0080ff ff80c0 ff80ff ' +
  'ff0000 ffff00 80ff00 00ff40 00ffff 0080c0 8080c0 ff00ff ' +
  '804040 ff8040 00ff00 008080 004080 8080ff 800040 ff0080 ' +
  '800000 ff8000 008000 008040 0000ff 0000a0 800080 8000ff ' +
  '400000 804000 004000 004040 000080 000040 400040 400080 ' +
  '000000 808000 808040 808080 408080 c0c0c0 400040 ffffff'
).split(' ');

const FIELDS = [
  ['hue', '色调(E):', 133], ['red', '红(R):', 14],
  ['sat', '饱和度(S):', 199], ['green', '绿(G):', 105],
  ['lum', '亮度(L):', 77], ['blue', '蓝(U):', 150],
];

function ViewSection({ title, name, top, bottom }) {
  return (
    <ViewGroup aria-label={title}>
      <ViewTitle>{title}</ViewTitle>
      <RadioPanel>
        <RadioLabel><Radio type="radio" name={name} />纯色</RadioLabel>
        <RadioLabel><Radio type="radio" name={name} defaultChecked />渐变</RadioLabel>
      </RadioPanel>
      <ColorRow>顶部<ColorWell $color={top} aria-label="顶部" /></ColorRow>
      <ColorRow>底部<ColorWell $color={bottom} aria-label="底部" /></ColorRow>
    </ViewGroup>
  );
}

export default function App() {
  const [selected, setSelected] = useState(0);
  return (
    <Page>
      <GlobalStyle />
      <Ribbon>
        <RibbonText $x={32} $y={32} $turn={-41} $size={26} $weight={400} $color="#000">9SUG</RibbonText>
        <RibbonText $x={64} $y={67} $turn={-44} $size={22} $weight={700} $color="#fff">学UG就上UG网</RibbonText>
      </Ribbon>
      <TitleBar>www.kongzipx.com 就上UG网 www.9sug.com QQ:838676806 NX9 - 建模 - [KZ_01.prt （修改的） ]</TitleBar>
      <MenuBar>
        {MENUS.map(([a, k, b]) => (
          <MenuLink href="#" key={a}>{a}{k && <u>{k}</u>}{b}</MenuLink>
        ))}
      </MenuBar>

      <ToolRow $h={32}>
        <Grip $first />
        <Lead $w={82} />
        <Tools items="open save | cut copy paste | undo v redo | wrench v | info |" />
        <CommandInput aria-label="查找命令" defaultValue="查找命令" />
        <Tools items="search o G fit v laptop v cube v orangePanel clipPanel v square v | exit exitFlag o G" />
        <Picker label="1" w={49} m="0 4px 0 2px" />
        <Tools items="layers layers v wcs v | partHand palette | flagPair v dia1 dia2 | measure v ruler letterA o G keyDoc redCurve" />
      </ToolRow>
      <ToolRow $h={26}>
        <Grip $first />
        <Lead $w={37} />
        <Tools items="swirl curveSheet mirror orangeTube mushroom holeCube orangeBlob dome bluePad | liftPad wavePad fourCubes splitBox addShape v cylBox foldSheet trimY padLine orangeBlock twoTubes | edgeBlend faceBlend faceBlend2 sheetRed tentRed globe o G pinkMove v pinkTri v pinkX pinkCopy v pinkPair v pinkDim v pinkSel pinkDelta pinkPlain v mirror o G quad meshArrow bluePlate v plate3 plateGrid plateArc meshOrange analyse redTri" />
      </ToolRow>
      <ToolRow $h={26} $fit>
        <Grip $first />
        <Lead $w={26} />
        <ToolButton><Icon name="flag" />完成草图</ToolButton>
        <Tools items="profile line arc circle fillet fillet2 rect poly plus greyShape v trimCorner | gTrim gTrim2 gCross | gDim v | gPara gBracket gFix v gColumns | gBoxes gSwirl gHand o G line v line arc curveSheet poly letterA offset blueDia hookRed hookGrey bridge project projectX yellowBook crossPlane mirror cylArrow o" />
      </ToolRow>
      <ToolRow $h={31} $plain>
        <Picker label="没有选择过滤器" w={133} m="0 0 0 5px" muted />
        <Picker label="整个装配" w={140} m="0 4px 0 7px" muted />
        <Tools items="gAssem | gUndoFilter filterBox t gSwapPlus gFingers | dashed v | gBrick redCube | gPoints gMoveDia gLine gMid gSpline gIntersect gCenter gQuad gPlus gTangent gFace | gGrid" />
      </ToolRow>

      <Workspace>
        <BgDialog>
          <BgTitle>
            <svg width="16" height="16" viewBox="0 0 16 16" fill="none" stroke="#fff">
              <circle cx="8" cy="8" r="5" strokeWidth="2" />
              <circle cx="8" cy="8" r="6.800" strokeWidth="2" strokeDasharray="2.670 2.670" />
              <circle cx="8" cy="8" r="1" fill="#fff" stroke="none" />
            </svg>
            编辑背景
            <IconClose aria-label="关闭">
              <svg width="16" height="14" viewBox="0 0 16 14" stroke="#fff" strokeWidth="2"><path d="M2 1l12 12M14 1L2 13" /></svg>
            </IconClose>
          </BgTitle>
          <BgBody>
            <ViewSection title="着色视图" name="shaded" top="#26254b" bottom="#e6e8e9" />
            <ViewSection title="线框视图" name="wire" top="#b3b4b6" bottom="#e6e8e9" />
            <PlainGroup>
              <ColorRow>普通颜色<ColorWell $color="#d2d2d4" aria-label="普通颜色" /></ColorRow>
            </PlainGroup>
            <FlatButton $wide>默认渐变颜色</FlatButton>
            <FlatActions>
              <FlatButton $primary>确定</FlatButton>
              <FlatButton>应用</FlatButton>
              <FlatButton>取消</FlatButton>
            </FlatActions>
          </BgBody>
        </BgDialog>

        <ColorDialog>
          <ColorTitle>
            <h2>颜色</h2>
            <CloseBox aria-label="关闭">
              <svg width="8" height="8" viewBox="0 0 8 8" stroke="#fff" strokeWidth="1.600"><path d="M.5.5l7 7M7.500.5l-7 7" /></svg>
            </CloseBox>
          </ColorTitle>
          <Client>
            <Column $w={235}>
              <Caption>基本颜色(B):</Caption>
              <SwatchGrid $after={23}>
                {BASIC.map((c, i) => (
                  <Swatch key={i} $color={`#${c}`} $selected={i === selected} onClick={() => setSelected(i)} aria-label={`#${c}`} />
                ))}
              </SwatchGrid>
              <Caption $after>自定义颜色(C):</Caption>
              <SwatchGrid $after={17}>
                {Array.from({ length: 16 }, (_, i) => <Swatch key={i} $color="#fff" aria-label="自定义" />)}
              </SwatchGrid>
              <RaisedButton disabled>规定自定义颜色(D) &gt; &gt;</RaisedButton>
              <ButtonPair>
                <RaisedButton $w={77} $default>确定</RaisedButton>
                <RaisedButton $w={77}>取消</RaisedButton>
              </ButtonPair>
            </Column>
            <Column $w={287}>
              <Pickers>
                <Spectrum>
                  <Crosshair width="19" height="19" viewBox="0 0 19 19" fill="#000">
                    <path d="M8 0h3v5H8zM8 14h3v5H8zM0 8h5v3H0zM14 8h5v3h-5z" />
                  </Crosshair>
                </Spectrum>
                <LumBar />
                <LumArrow width="7" height="13" viewBox="0 0 7 13"><path d="M7 0v13L0 6.500z" /></LumArrow>
              </Pickers>
              <Details>
                <PreviewBox>
                  <Preview />
                  <span>颜色|纯色(O)</span>
                </PreviewBox>
                <Fields>
                  {FIELDS.map(([id, label, value]) => (
                    <Fragment key={id}>
                      <FieldLabel htmlFor={id}>{label}</FieldLabel>
                      <NumberInput id={id} defaultValue={value} />
                    </Fragment>
                  ))}
                </Fields>
              </Details>
              <RaisedButton $w={281}>添加到自定义颜色(A)</RaisedButton>
            </Column>
          </Client>
          <RedMark />
        </ColorDialog>
      </Workspace>
    </Page>
  );
}
